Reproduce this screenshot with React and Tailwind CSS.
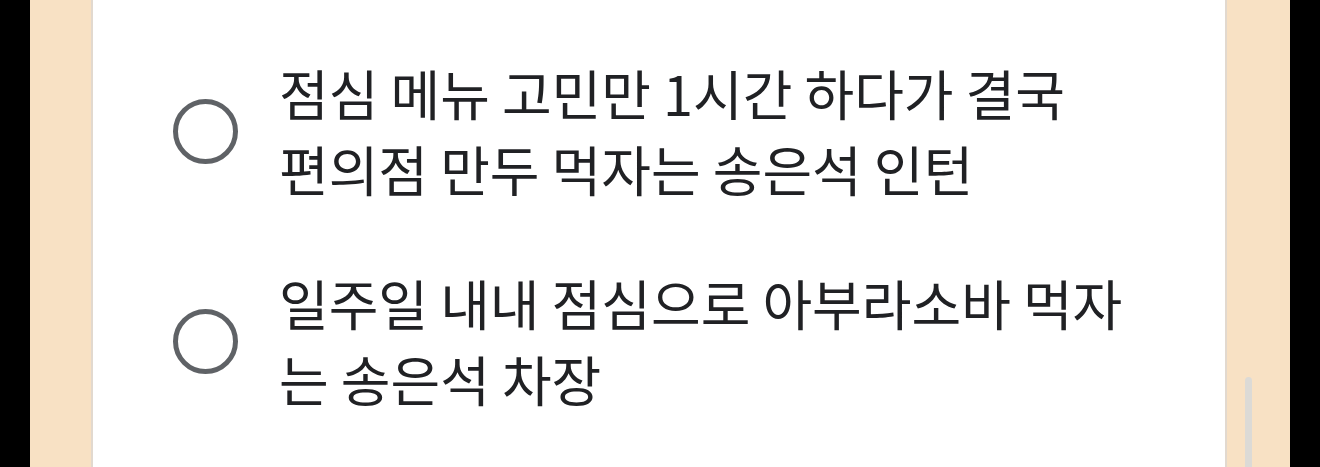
import React from 'react';

const options = [
  '점심 메뉴 고민만 1시간 하다가 결국 편의점 만두 먹자는 송은석 인턴',
  '일주일 내내 점심으로 아부라소바 먹자는 송은석 차장',
];

const Radio = () => (
  <span className="block w-[65px] h-[65px] shrink-0 rounded-full border-[5px] border-[#5f6266]" />
);

export default function App() {
  return (
    <div className="flex h-[467px] w-full overflow-hidden bg-black">
      <div className="w-[30px] shrink-0 bg-black" />
      <div className="w-[61px] shrink-0 bg-[#f8e1c4]" />

      <div className="flex-1 bg-white border-x-2 border-[#e2d9cf]">
        <ul className="flex flex-col gap-[58px] pt-[55px] pl-[80px]">
          {options.map((text) => (
            <li key={text} className="flex items-center gap-[41px]">
              <Radio />
              <p
                className="w-[844px] text-[54px] leading-[76px] text-[#202124]"
                style={{ fontFamily: '"Noto Sans CJK KR", "Noto Sans", sans-serif' }}
              >
                {text}
              </p>
            </li>
          ))}
        </ul>
      </div>

      <div className="relative w-[63px] shrink-0 bg-[#f8e1c4]">
        {/* scrollbar thumb */}
        <div className="absolute left-[18px] top-[377px] w-[7px] h-[120px] rounded-full bg-[#dcdad6]" />
      </div>
      <div className="w-[30px] shrink-0 bg-black" />
    </div>
  );
}
